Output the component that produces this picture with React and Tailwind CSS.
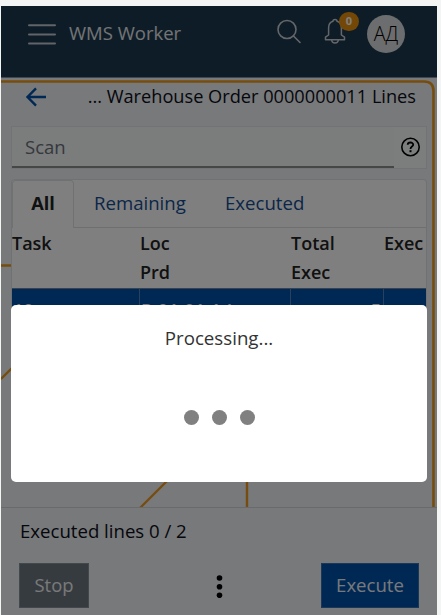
import React from "react";

function Backdrop() {
  return (
    <svg className="absolute inset-0" width="436" height="609" fill="none" stroke="#ec9a1c" strokeWidth="3">
      <path d="M0 75.5H423Q432.5 75.5 432.5 85V502" strokeWidth="2.6" />
      <path d="M0 259.5H12M0 373L12 361M138 503L166 475M246 474V502" strokeWidth="2.4" />
    </svg>
  );
}

function Header() {
  return (
    <header className="relative flex h-[72px] shrink-0 items-start border-b border-[#83919c] bg-[#1b384f] pl-[27px] text-[#e6e8ea]">
      <svg className="mt-[17px]" width="28" height="23" stroke="#c4cad1" strokeWidth="2" strokeLinecap="round">
        <path d="M1 2.2H27M1 11.5H27M1 20.6H27" />
      </svg>
      <span className="ml-[13px] mt-[13px] w-[207px] whitespace-nowrap text-[18.5px] leading-[28px]">WMS Worker</span>
      <svg className="mt-[12px]" width="26" height="27" fill="none" stroke="#c8cdd2" strokeWidth="1.6" strokeLinecap="round">
        <circle cx="11" cy="11.5" r="9" />
        <path d="M17.5 18L24 24.5" />
      </svg>
      <div className="relative ml-[21px] mt-[12px] h-[27px] w-[24px]">
        <svg width="24" height="27" fill="none" stroke="#c8cdd2" strokeWidth="1.5" strokeLinejoin="round">
          <path d="M10 3.2C10 .8 14 .8 14 3.2C17.4 4 18.4 6.5 18.4 10V17L21.5 19.2V21.7H2.5V19.2L5.6 17V10C5.6 6.5 6.6 4 10 3.2Z" />
          <path d="M8.6 22C9 26 15 26 15.4 22" />
        </svg>
        <span className="absolute -top-[6px] left-[16px] flex h-[19px] w-[20px] items-center justify-center rounded-full bg-[#e7900e] text-[11px] font-bold text-white">0</span>
      </div>
      <span className="ml-[20px] mt-[9px] flex size-[38px] items-center justify-center rounded-full bg-[#d9dbdc] text-[19.5px] font-light text-black">АД</span>
    </header>
  );
}

function ScanField() {
  return (
    <div className="mx-[10px] mt-[6px] flex h-[43px] shrink-0 border border-[#e2e7e9] bg-[#f9fcfb]">
      <div className="w-[382px] border-b-2 border-[#8b8f8f] bg-[#f5faf7] pl-[13px] text-[18.5px] leading-[40px] text-[#6c707c]">Scan</div>
      <svg className="ml-[6px] mt-[9px]" width="22" height="22" fill="none" stroke="#000">
        <circle cx="10.5" cy="11" r="8.7" strokeWidth="1.6" />
        <path d="M7.7 8.8C7.8 5.7 13.3 5.8 13.2 8.8C13.1 10.7 10.5 10.5 10.5 13" strokeWidth="1.8" />
        <path d="M10.5 14.2V16.2" strokeWidth="2" />
      </svg>
    </div>
  );
}

function TaskTable() {
  return (
    <section className="mx-[10px] mt-[10px] flex h-[180px] shrink-0 flex-col overflow-hidden rounded-t border-x border-t border-[#e0e2e4] bg-white text-[18.6px]">
      <nav className="flex h-[48px] shrink-0 border-b border-[#dcdedf] text-[#154d91]">
        <div className="-mb-px w-[62px] rounded-t border border-b-0 border-[#dfe2e7] bg-white text-center text-[18.2px] font-bold leading-[45px] text-[#222]">All</div>
        <div className="w-[151px] pl-[20px] leading-[46px]">Remaining</div>
        <div className="leading-[46px]">Executed</div>
      </nav>
      <div className="grid h-[60px] shrink-0 grid-cols-[128px_151px_93px_1fr] whitespace-nowrap pt-px text-[18px] font-semibold leading-[29px] text-[#222]">
        <div>Task</div>
        <div>Loc<br />Prd</div>
        <div>Total<br />Exec</div>
        <div>Exec</div>
      </div>
      <div className="grid h-[60px] shrink-0 grid-cols-[128px_151px_93px_1fr] divide-x divide-[#5182bd] border-t border-[#6f8498] bg-[#0050aa] text-[18px] font-semibold leading-[42px] text-white">
        <div className="pl-px">10</div>
        <div className="pl-px">P-01-01-1-L</div>
        <div className="pr-[2px] text-right">5</div>
        <div />
      </div>
    </section>
  );
}

function Footer() {
  return (
    <footer className="relative flex h-[108px] shrink-0 flex-col border-t border-[#d3d5d7] bg-[#f0f2f5] px-[18px] text-[18.6px]">
      <p className="pl-px pt-[8px] leading-[29px] text-[#0b0e19]">Executed lines 0 / 2</p>
      <div className="mt-[18px] flex items-center justify-between">
        <button className="h-[45px] w-[70px] border border-[#85919b] bg-[#6c767f] pb-px text-[18.4px] text-[#f2f3f4]">Stop</button>
        <svg className="ml-[28px]" width="8" height="24" fill="#000">
          <circle cx="4.5" cy="4" r="2.8" />
          <circle cx="4.5" cy="12.7" r="2.8" />
          <circle cx="4.5" cy="21.3" r="2.8" />
        </svg>
        <button className="h-[45px] w-[98px] border border-[#3871b1] bg-[#0050aa] pb-[2px] text-[18.6px] text-[#eef2f7]">Execute</button>
      </div>
    </footer>
  );
}

export default function App() {
  return (
    <div className="h-[615px] w-[441px] overflow-hidden bg-[#f3f5f5] pl-px pt-[6px] font-['Open_Sans','Noto_Sans',sans-serif]">
      <div className="relative flex h-[609px] w-[436px] flex-col overflow-hidden bg-[#f0f2f5]">
        <Backdrop />
        <Header />
        <div className="relative flex min-h-0 flex-1 flex-col">
          <div className="flex h-[42px] shrink-0 items-start justify-between pl-[24px] pr-[21px] pt-[5px]">
            <svg className="mt-[4px]" width="22" height="20" fill="none" stroke="#0050aa" strokeWidth="2.4">
              <path d="M21 10H2.5M11 1.4L2.5 10L11 18.6" />
            </svg>
            <h1 className="whitespace-nowrap text-[18.2px] leading-[27px] text-[#0b0e19]">... Warehouse Order 0000000011 Lines</h1>
          </div>
          <ScanField />
          <TaskTable />
        </div>
        <Footer />
        <div className="absolute inset-0 bg-black/50" />
        <div className="absolute left-[10px] top-[299px] flex h-[177px] w-[416px] flex-col items-center rounded-[5px] bg-white pt-[19px]">
          <p className="text-[18.7px] leading-[28px] text-[#333]">Processing...</p>
          <div className="mt-[58px] flex gap-[13px]">
            <span className="size-[15px] rounded-full bg-[#808080]" />
            <span className="size-[15px] rounded-full bg-[#808080]" />
            <span className="size-[15px] rounded-full bg-[#808080]" />
          </div>
        </div>
      </div>
    </div>
  );
}
